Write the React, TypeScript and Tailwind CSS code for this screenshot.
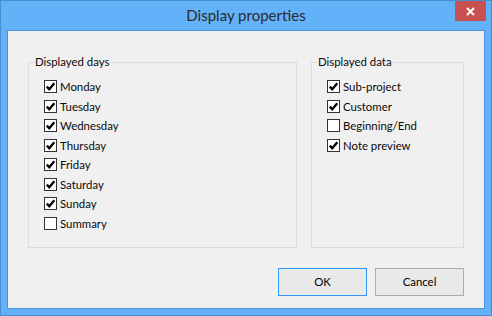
import type { ReactNode } from "react";

const font = { fontFamily: 'Lato, "Noto Sans", sans-serif' };

function Check({ checked, label }: { checked: boolean; label: string }) {
  return (
    <div className="flex h-[19.5px] items-center">
      <span className="ml-[1px] flex h-[13px] w-[13px] shrink-0 items-center justify-center border border-[#333] bg-white">
        {checked && (
          <svg width="11" height="11" viewBox="0 0 11 11">
            <path d="M1.8 5.6 L4.3 8.2 L9.3 2.2" fill="none" stroke="#000" strokeWidth="2.3" />
          </svg>
        )}
      </span>
      <span className="ml-[3px] text-[11.4px] leading-none text-[#0a0a0a]">{label}</span>
    </div>
  );
}

function Group({ title, width, children }: { title: string; width: string; children: ReactNode }) {
  return (
    <fieldset className={`${width} h-[194px] border border-[#dcdcdc] px-[14px] pb-0 pt-[7px]`}>
      <legend className="ml-[-9px] px-[1px] text-[11.4px] leading-[16px] text-[#0a0a0a]">{title}</legend>
      {children}
    </fieldset>
  );
}

export default function App() {
  const days: [string, boolean][] = [
    ["Monday", true],
    ["Tuesday", true],
    ["Wednesday", true],
    ["Thursday", true],
    ["Friday", true],
    ["Saturday", true],
    ["Sunday", true],
    ["Summary", false],
  ];
  const data: [string, boolean][] = [
    ["Sub-project", true],
    ["Customer", true],
    ["Beginning/End", false],
    ["Note preview", true],
  ];

  return (
    <div style={font} className="flex h-[316px] w-[492px] flex-col border border-[#4a8dd0] bg-[#63b1f9]">
      <div className="relative flex h-[29px] items-center justify-center">
        <span className="text-[15px] text-[#2b2b2b]">Display properties</span>
        <div className="absolute right-[5px] top-0 flex h-[20px] w-[31px] items-center justify-center bg-[#c75050]">
          <svg width="9" height="9" viewBox="0 0 9 9">
            <path d="M1 1 L8 8 M8 1 L1 8" stroke="#fff" strokeWidth="2" />
          </svg>
        </div>
      </div>
      <div className="mx-[6px] flex flex-1 flex-col border border-[#4b93d8] bg-[#f0f0f0] px-[20px] pt-[23px]">
        <div className="flex gap-[14px]">
          <Group title="Displayed days" width="w-[269px]">
            {days.map(([d, c]) => (
              <Check key={d} label={d} checked={c} />
            ))}
          </Group>
          <Group title="Displayed data" width="w-[153px]">
            {data.map(([d, c]) => (
              <Check key={d} label={d} checked={c} />
            ))}
          </Group>
        </div>
        <div className="mt-[20px] flex justify-end gap-[8px]">
          <button className="h-[28px] w-[89px] border border-[#3399ff] bg-[#e9e9e9] text-[11.4px] text-black">OK</button>
          <button className="h-[28px] w-[89px] border border-[#adadad] bg-[#e9e9e9] text-[11.4px] text-black">Cancel</button>
        </div>
      </div>
      <div className="h-[6px]" />
    </div>
  );
}
